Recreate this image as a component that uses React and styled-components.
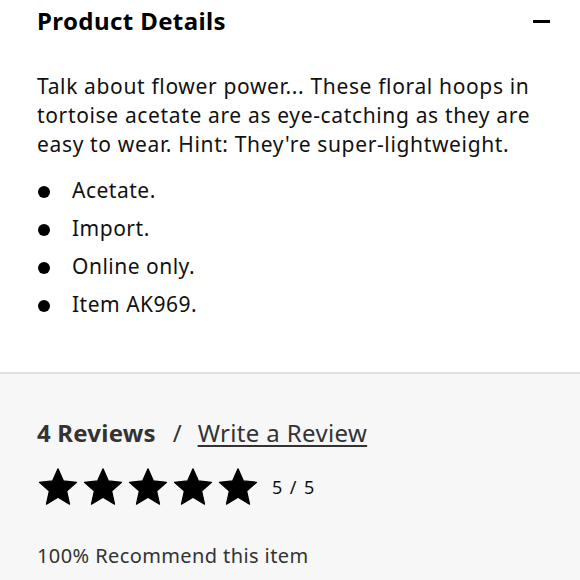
import React from 'react';
import styled, { createGlobalStyle } from 'styled-components';

const GlobalStyle = createGlobalStyle`
  body {
    margin: 0;
    background: #ffffff;
    font-family: 'Noto Sans', 'Open Sans', sans-serif;
    color: #111;
  }
`;

const bullets = ['Acetate.', 'Import.', 'Online only.', 'Item AK969.'];

const Star = () => (
  <svg width="42" height="42" viewBox="0 0 24 24">
    <path
      d="M12 1.6l3.1 6.95 7.5.75-5.65 5.05 1.65 7.45L12 17.9l-6.6 3.9 1.65-7.45L1.4 9.3l7.5-.75z"
      fill="#000"
      stroke="#000"
      strokeWidth="0.7"
      strokeLinejoin="round"
    />
  </svg>
);

const App = () => (
  <Page>
    <GlobalStyle />
    <Details>
      <Header>
        <Title>Product Details</Title>
        <Minus />
      </Header>
      <Description>
        Talk about flower power... These floral hoops in tortoise acetate are as
        eye-catching as they are easy to wear. Hint: They're super-lightweight.
      </Description>
      <BulletList>
        {bullets.map((item) => (
          <BulletItem key={item}>{item}</BulletItem>
        ))}
      </BulletList>
    </Details>
    <Reviews>
      <ReviewHead>
        <Count>4 Reviews</Count>
        <Slash>/</Slash>
        <WriteLink href="#">Write a Review</WriteLink>
      </ReviewHead>
      <Rating>
        <Stars>
          {[0, 1, 2, 3, 4].map((i) => (
            <Star key={i} />
          ))}
        </Stars>
        <Score>5 / 5</Score>
      </Rating>
      <Recommend>100% Recommend this item</Recommend>
    </Reviews>
  </Page>
);

const Page = styled.div`
  width: 580px;
  height: 580px;
  overflow: hidden;
  display: flex;
  flex-direction: column;
`;

const Details = styled.section`
  padding: 6px 30px 0 37px;
  height: 374px;
  box-sizing: border-box;
  border-bottom: 2px solid #e0e0e0;
  flex-shrink: 0;
`;

const Header = styled.div`
  display: flex;
  align-items: center;
  justify-content: space-between;
`;

const Title = styled.h2`
  margin: 0;
  font-size: 24px;
  font-weight: 700;
  line-height: 30px;
  letter-spacing: 0.4px;
  color: #000;
`;

const Minus = styled.span`
  width: 17px;
  height: 3px;
  background: #000;
`;

const Description = styled.p`
  margin: 36px 0 0;
  max-width: 505px;
  font-size: 21px;
  line-height: 29px;
  letter-spacing: 0.65px;
  color: #111;
`;

const BulletList = styled.ul`
  list-style: none;
  margin: 12px 0 0;
  padding: 0;
`;

const BulletItem = styled.li`
  position: relative;
  padding-left: 35px;
  font-size: 21px;
  line-height: 38px;
  letter-spacing: 0.5px;
  color: #111;

  &::before {
    content: '';
    position: absolute;
    left: 1px;
    top: 15px;
    width: 12px;
    height: 12px;
    border-radius: 50%;
    background: #000;
  }
`;

const Reviews = styled.section`
  flex: 1;
  background: #f7f7f7;
  padding: 44px 37px 0;
`;

const ReviewHead = styled.div`
  display: flex;
  align-items: baseline;
  font-size: 24px;
  line-height: 30px;
  color: #333;
`;

const Count = styled.span`
  font-weight: 700;
  letter-spacing: 0.2px;
`;

const Slash = styled.span`
  margin: 0 16px 0 17px;
`;

const WriteLink = styled.a`
  color: #333;
  letter-spacing: 0.35px;
  text-decoration: underline;
  text-underline-offset: 3px;
  text-decoration-thickness: 1.5px;
`;

const Rating = styled.div`
  display: flex;
  align-items: center;
  margin-top: 18px;
`;

const Stars = styled.div`
  display: flex;
  gap: 3px;
`;

const Score = styled.span`
  margin-left: 13px;
  font-size: 18px;
  letter-spacing: 1.4px;
  color: #111;
`;

const Recommend = styled.p`
  margin: 34px 0 0;
  font-size: 20px;
  line-height: 28px;
  letter-spacing: 0.4px;
  color: #333;
`;

export default App;
